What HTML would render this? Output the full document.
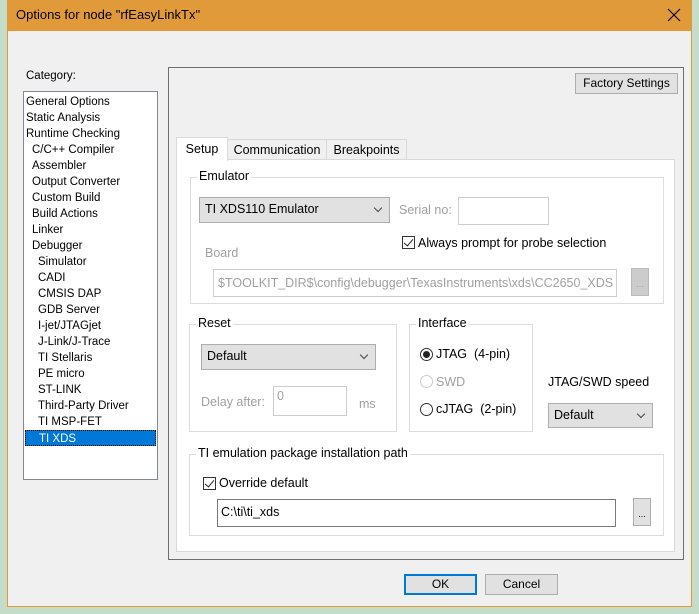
<!DOCTYPE html>
<html><head><style>
*{box-sizing:border-box}
body{margin:0;width:699px;height:614px;background:#c5dcc8;font-family:"Liberation Sans",Arial,sans-serif;font-size:12px;color:#000;position:relative;overflow:hidden}
.a{position:absolute}
.win{left:7px;top:0;width:685px;height:607px;background:#f0f0f0;border:1px solid #e09a3a;border-top:none}
.title{left:7px;top:0;width:685px;height:31px;background:#e09a3a}
.btn{position:absolute;background:#e1e1e1;border:1px solid #adadad;text-align:center}
.grp{position:absolute;border:1px solid #dcdcdc}
.lg{position:absolute;background:#fff;padding:0 2px;top:-9px;left:6px;font-size:12.5px}
.dd{position:absolute;background:#e1e1e1;border:1px solid #adadad;padding-left:5px;line-height:23px;font-size:12.5px}
.dd:after{content:"";position:absolute;right:8px;top:7px;width:5px;height:5px;border-right:1px solid #444;border-bottom:1px solid #444;transform:rotate(45deg)}
.gray{color:#a0a0a0}
.cb{position:absolute;width:13px;height:13px;border:1px solid #333;background:#fff}
.cb:after{content:"";position:absolute;left:3px;top:0px;width:4px;height:8px;border-right:1.5px solid #222;border-bottom:1.5px solid #222;transform:rotate(40deg)}
.rb{position:absolute;width:13px;height:13px;border:1px solid #333;border-radius:50%;background:#fff}
.li{position:absolute;left:2px;height:16px;line-height:16px;font-size:11.5px}
</style></head><body>
<div class="a win"></div>
<div class="a title"></div>
<div class="a" style="left:16px;top:7px;font-size:13px">Options for node "rfEasyLinkTx"</div>
<svg class="a" style="left:667px;top:8px" width="14" height="14"><path d="M1 1L13 13M13 1L1 13" stroke="#000" stroke-width="1.2"/></svg>

<div class="a" style="left:26px;top:70px;font-size:11.5px">Category:</div>
<div class="a" style="left:23px;top:91px;width:135px;height:389px;background:#fff;border:1px solid #828790">
<div class="li" style="top:2px">General Options</div>
<div class="li" style="top:18px">Static Analysis</div>
<div class="li" style="top:34px">Runtime Checking</div>
<div class="li" style="top:50px;left:8px">C/C++ Compiler</div>
<div class="li" style="top:66px;left:8px">Assembler</div>
<div class="li" style="top:82px;left:8px">Output Converter</div>
<div class="li" style="top:98px;left:8px">Custom Build</div>
<div class="li" style="top:114px;left:8px">Build Actions</div>
<div class="li" style="top:130px;left:8px">Linker</div>
<div class="li" style="top:146px;left:8px">Debugger</div>
<div class="li" style="top:162px;left:14px">Simulator</div>
<div class="li" style="top:178px;left:14px">CADI</div>
<div class="li" style="top:194px;left:14px">CMSIS DAP</div>
<div class="li" style="top:210px;left:14px">GDB Server</div>
<div class="li" style="top:226px;left:14px">I-jet/JTAGjet</div>
<div class="li" style="top:242px;left:14px">J-Link/J-Trace</div>
<div class="li" style="top:258px;left:14px">TI Stellaris</div>
<div class="li" style="top:274px;left:14px">PE micro</div>
<div class="li" style="top:290px;left:14px">ST-LINK</div>
<div class="li" style="top:306px;left:14px">Third-Party Driver</div>
<div class="li" style="top:322px;left:14px">TI MSP-FET</div>
<div class="li" style="top:338px;left:1px;width:131px;background:#0078d7;color:#fff;padding-left:13px;border:1px dotted #000">TI XDS</div>
</div>

<div class="a" style="left:168px;top:67px;width:516px;height:493px;border:1px solid #6e6e6e"></div>
<div class="btn" style="left:575px;top:73px;width:103px;height:21px;line-height:19px">Factory Settings</div>

<div class="a" style="left:176px;top:159px;width:499px;height:393px;background:#fff;border:1px solid #d9d9d9"></div>
<div class="a" style="left:227px;top:139px;width:100px;height:21px;border:1px solid #d9d9d9;background:#f0f0f0;text-align:center;line-height:21px;font-size:12.5px">Communication</div>
<div class="a" style="left:326px;top:139px;width:81px;height:21px;border:1px solid #d9d9d9;background:#f0f0f0;text-align:center;line-height:21px;font-size:12.5px">Breakpoints</div>
<div class="a" style="left:176px;top:137px;width:52px;height:24px;border:1px solid #d9d9d9;border-bottom:none;background:#fff;text-align:center;line-height:22px;font-size:12.5px">Setup</div>

<div class="grp" style="left:190px;top:177px;width:474px;height:127px"><div class="lg">Emulator</div></div>
<div class="dd" style="left:199px;top:197px;width:191px;height:26px">TI XDS110 Emulator</div>
<div class="a gray" style="left:399px;top:203px;font-size:12.5px">Serial no:</div>
<div class="a" style="left:458px;top:197px;width:91px;height:28px;border:1px solid #ccc;background:#fff"></div>
<div class="cb" style="left:402px;top:236px"></div>
<div class="a" style="left:418px;top:236px;font-size:12.5px">Always prompt for probe selection</div>
<div class="a gray" style="left:205px;top:246px;font-size:12.5px">Board</div>
<div class="a gray" style="left:213px;top:269px;width:404px;height:28px;border:1px solid #ccc;background:#fff;padding-left:4px;line-height:26px;font-size:12.5px;white-space:nowrap;overflow:hidden">$TOOLKIT_DIR$\config\debugger\TexasInstruments\xds\CC2650_XDS</div>
<div class="btn gray" style="left:631px;top:268px;width:18px;height:28px;background:#ccc;border-color:#bbb;line-height:30px;font-size:9px">...</div>

<div class="grp" style="left:189px;top:324px;width:208px;height:108px;background:#fff"><div class="lg">Reset</div></div>
<div class="dd" style="left:201px;top:344px;width:175px;height:26px">Default</div>
<div class="a gray" style="left:201px;top:395px;font-size:12.5px">Delay after:</div>
<div class="a gray" style="left:273px;top:386px;width:74px;height:30px;border:1px solid #ccc;background:#fff;padding:2px 3px;font-size:12.5px">0</div>
<div class="a gray" style="left:359px;top:397px;font-size:12.5px">ms</div>

<div class="grp" style="left:409px;top:324px;width:124px;height:108px;background:#fff"><div class="lg">Interface</div></div>
<div class="rb" style="left:420px;top:348px"><div class="a" style="left:2px;top:2px;width:7px;height:7px;border-radius:50%;background:#222"></div></div>
<div class="a" style="left:436px;top:347px;font-size:12.5px">JTAG&nbsp; (4-pin)</div>
<div class="rb" style="left:420px;top:375px;border-color:#ccc"></div>
<div class="a gray" style="left:436px;top:375px;font-size:12.5px">SWD</div>
<div class="rb" style="left:420px;top:403px"></div>
<div class="a" style="left:436px;top:402px;font-size:12.5px">cJTAG&nbsp; (2-pin)</div>

<div class="a" style="left:548px;top:375px;font-size:12.5px">JTAG/SWD speed</div>
<div class="dd" style="left:548px;top:403px;width:105px;height:25px">Default</div>

<div class="grp" style="left:189px;top:454px;width:475px;height:82px"><div class="lg">TI emulation package installation path</div></div>
<div class="cb" style="left:203px;top:477px"></div>
<div class="a" style="left:219px;top:476px;font-size:12.5px">Override default</div>
<div class="a" style="left:217px;top:499px;width:399px;height:28px;border:1px solid #7a7a7a;background:#fff;padding-left:3px;line-height:24px;font-size:12.5px">C:\ti\ti_xds</div>
<div class="btn" style="left:633px;top:498px;width:18px;height:28px;line-height:30px;font-size:9px">...</div>

<div class="btn" style="left:404px;top:574px;width:73px;height:21px;border:2px solid #0078d7;line-height:17px">OK</div>
<div class="btn" style="left:485px;top:574px;width:73px;height:21px;line-height:19px">Cancel</div>
</body></html>
